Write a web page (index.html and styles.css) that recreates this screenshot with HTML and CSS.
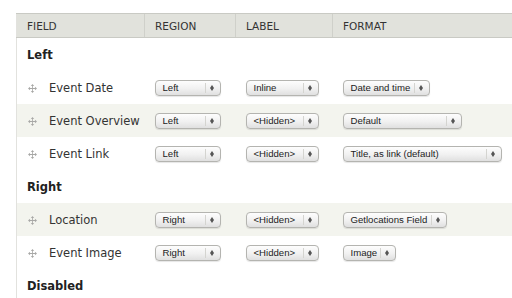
FILE: index.html
```html
<!DOCTYPE html>
<html lang="en">
<head>
  <meta charset="UTF-8">
  <title>Manage display</title>
  <link rel="stylesheet" href="styles.css">
</head>
<body>
  <table class="fields">
    <colgroup>
      <col class="c-field">
      <col class="c-region">
      <col class="c-label">
      <col>
    </colgroup>
    <thead>
      <tr><th>Field</th><th>Region</th><th>Label</th><th>Format</th></tr>
    </thead>
    <tbody>
      <tr class="region"><td colspan="4">Left</td></tr>
      <tr>
        <td class="name"><svg class="drag" viewBox="0 0 11 11"><path d="M5.5 0L7.5 2.5H6V5H8.5V3.5L11 5.5L8.5 7.5V6H6V8.5H7.5L5.5 11L3.5 8.5H5V6H2.5V7.5L0 5.5L2.5 3.5V5H5V2.5H3.5Z"/></svg>Event Date</td>
        <td><span class="sel w-region">Left<i class="arr"></i></span></td>
        <td><span class="sel w-label">Inline<i class="arr"></i></span></td>
        <td><span class="sel w-date">Date and time<i class="arr"></i></span></td>
      </tr>
      <tr class="even">
        <td class="name"><svg class="drag" viewBox="0 0 11 11"><path d="M5.5 0L7.5 2.5H6V5H8.5V3.5L11 5.5L8.5 7.5V6H6V8.5H7.5L5.5 11L3.5 8.5H5V6H2.5V7.5L0 5.5L2.5 3.5V5H5V2.5H3.5Z"/></svg>Event Overview</td>
        <td><span class="sel w-region">Left<i class="arr"></i></span></td>
        <td><span class="sel w-label">&lt;Hidden&gt;<i class="arr"></i></span></td>
        <td><span class="sel w-default">Default<i class="arr"></i></span></td>
      </tr>
      <tr>
        <td class="name"><svg class="drag" viewBox="0 0 11 11"><path d="M5.5 0L7.5 2.5H6V5H8.5V3.5L11 5.5L8.5 7.5V6H6V8.5H7.5L5.5 11L3.5 8.5H5V6H2.5V7.5L0 5.5L2.5 3.5V5H5V2.5H3.5Z"/></svg>Event Link</td>
        <td><span class="sel w-region">Left<i class="arr"></i></span></td>
        <td><span class="sel w-label">&lt;Hidden&gt;<i class="arr"></i></span></td>
        <td><span class="sel w-title">Title, as link (default)<i class="arr"></i></span></td>
      </tr>
      <tr class="region"><td colspan="4">Right</td></tr>
      <tr class="even">
        <td class="name"><svg class="drag" viewBox="0 0 11 11"><path d="M5.5 0L7.5 2.5H6V5H8.5V3.5L11 5.5L8.5 7.5V6H6V8.5H7.5L5.5 11L3.5 8.5H5V6H2.5V7.5L0 5.5L2.5 3.5V5H5V2.5H3.5Z"/></svg>Location</td>
        <td><span class="sel w-region">Right<i class="arr"></i></span></td>
        <td><span class="sel w-label">&lt;Hidden&gt;<i class="arr"></i></span></td>
        <td><span class="sel w-getloc">Getlocations Field<i class="arr"></i></span></td>
      </tr>
      <tr>
        <td class="name"><svg class="drag" viewBox="0 0 11 11"><path d="M5.5 0L7.5 2.5H6V5H8.5V3.5L11 5.5L8.5 7.5V6H6V8.5H7.5L5.5 11L3.5 8.5H5V6H2.5V7.5L0 5.5L2.5 3.5V5H5V2.5H3.5Z"/></svg>Event Image</td>
        <td><span class="sel w-region">Right<i class="arr"></i></span></td>
        <td><span class="sel w-label">&lt;Hidden&gt;<i class="arr"></i></span></td>
        <td><span class="sel w-image">Image<i class="arr"></i></span></td>
      </tr>
      <tr class="region"><td colspan="4">Disabled</td></tr>
    </tbody>
  </table>
</body>
</html>
```

FILE: styles.css
```css
body {
  margin: 0;
  padding: 13px 0 0 16px;
  background: #fff;
  color: #333;
  font-family: "DejaVu Sans", Verdana, sans-serif;
  overflow: hidden;
}
.fields {
  width: 100%;
  border-collapse: collapse;
  border-left: 1px solid #e2e2de;
}
.c-field { width: 128px; }
.c-region { width: 91px; }
.c-label { width: 97px; }

.fields th {
  height: 23px;
  padding: 0 0 0 10px;
  background: #e1e2dc;
  border-top: 1px solid #c9cac4;
  border-bottom: 1px solid #c9cac4;
  border-left: 1px solid #cfd0ca;
  font-size: 10.5px;
  font-weight: normal;
  text-align: left;
  text-transform: uppercase;
  color: #333;
}
.fields th:first-child { border-left: none; }

.fields td {
  height: 33px;
  padding: 0 0 0 10px;
  font-size: 11.5px;
  vertical-align: middle;
}
.fields tr.even td { background: #f3f4ee; }
.fields tr.region td {
  font-weight: bold;
  font-size: 11.5px;
  color: #222;
}
.fields td.name { padding-left: 11px; }

.drag {
  width: 9px;
  height: 9px;
  fill: #a8a8a6;
  margin: 0 12px 0 0;
  vertical-align: -1px;
}

.sel {
  display: inline-flex;
  align-items: center;
  box-sizing: border-box;
  position: relative;
  height: 16px;
  padding: 0 18px 0 7px;
  border: 1px solid #b4b4b0;
  border-radius: 4px;
  background: linear-gradient(#fdfdfd, #f2f2f2 50%, #e0e0e0);
  box-shadow: 0 1px 1px rgba(0, 0, 0, 0.1);
  font-family: "Liberation Sans", Arial, sans-serif;
  font-size: 9.6px;
  color: #222;
  white-space: nowrap;
  overflow: hidden;
  vertical-align: middle;
}
.arr {
  position: absolute;
  top: 2px;
  bottom: 2px;
  right: 0;
  width: 14px;
  border-left: 1px solid #d4d4d0;
}
.arr::before,
.arr::after {
  content: "";
  position: absolute;
  left: 4.5px;
  border-left: 2.5px solid transparent;
  border-right: 2.5px solid transparent;
}
.arr::before { top: 2px; border-bottom: 3px solid #555; }
.arr::after { bottom: 2px; border-top: 3px solid #555; }

.w-region { width: 66px; }
.w-label { width: 73px; }
.w-date { width: 87px; }
.w-default { width: 119px; }
.w-title { width: 159px; }
.w-getloc { width: 104px; }
.w-image { width: 53px; }
```
